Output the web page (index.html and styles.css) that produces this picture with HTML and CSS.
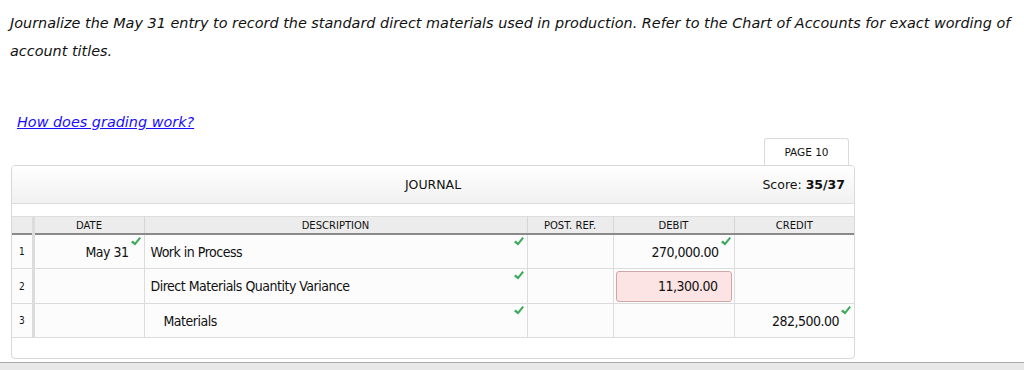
FILE: index.html
```html
<!DOCTYPE html>
<html lang="en">
<head>
    <meta charset="UTF-8">
    <meta name="viewport" content="width=device-width, initial-scale=1.0">
    <title>Journal Entry</title>
    <link rel="stylesheet" href="styles.css">
</head>
<body>

    <svg class="defs" width="0" height="0">
        <symbol id="tick" viewBox="0 0 10 9">
            <path d="M0 5.2 L1.9 3.6 L3.9 5.6 L8.4 0 L10 1.3 L4.1 8.6 Z" fill="currentColor"/>
        </symbol>
    </svg>

    <div class="page">
        <p class="prompt">Journalize the May 31 entry to record the standard direct materials used in production. Refer to the Chart of Accounts for exact wording of account titles.</p>

        <a href="#" class="help">How does grading work?</a>

        <div class="journal-wrap">
            <div class="tab">PAGE 10</div>

            <div class="journal">
                <div class="journal-head">
                    <span class="title">JOURNAL</span>
                    <span class="score">Score: <b>35/37</b></span>
                </div>

                <table class="entries">
                    <colgroup>
                        <col class="c-num">
                        <col class="c-date">
                        <col class="c-desc">
                        <col class="c-ref">
                        <col class="c-debit">
                        <col class="c-credit">
                    </colgroup>
                    <thead>
                        <tr>
                            <th class="num"></th>
                            <th>DATE</th>
                            <th>DESCRIPTION</th>
                            <th>POST. REF.</th>
                            <th>DEBIT</th>
                            <th>CREDIT</th>
                        </tr>
                    </thead>
                    <tbody>
                        <tr>
                            <td class="num">1</td>
                            <td class="date">May 31<svg class="tick"><use href="#tick"/></svg></td>
                            <td class="desc">Work in Process<svg class="tick"><use href="#tick"/></svg></td>
                            <td></td>
                            <td class="amount">270,000.00<svg class="tick"><use href="#tick"/></svg></td>
                            <td class="amount"></td>
                        </tr>
                        <tr class="tall">
                            <td class="num">2</td>
                            <td class="date"></td>
                            <td class="desc">Direct Materials Quantity Variance<svg class="tick"><use href="#tick"/></svg></td>
                            <td></td>
                            <td class="amount"><span class="wrong">11,300.00</span></td>
                            <td class="amount"></td>
                        </tr>
                        <tr>
                            <td class="num">3</td>
                            <td class="date"></td>
                            <td class="desc credit-line">Materials<svg class="tick"><use href="#tick"/></svg></td>
                            <td></td>
                            <td class="amount"></td>
                            <td class="amount">282,500.00<svg class="tick"><use href="#tick"/></svg></td>
                        </tr>
                    </tbody>
                </table>

                <div class="journal-foot"></div>
            </div>
        </div>
    </div>

    <div class="status-bar"></div>

</body>
</html>
```

FILE: styles.css
```css
body {
    margin: 0;
    font-family: "DejaVu Sans", Verdana, sans-serif;
    color: #111;
    background-color: #fff;
}

.defs {
    position: absolute;
}

.page {
    height: 362px;
    overflow: hidden;
}

.prompt {
    margin: 0;
    padding: 9px 10px 0;
    font-size: 14.4px;
    font-style: italic;
    line-height: 28px;
}

.help {
    display: inline-block;
    margin: 49px 0 0 17px;
    font-size: 14.4px;
    font-style: italic;
    color: #1a0dff;
    text-decoration: underline;
}

/* journal panel */

.journal-wrap {
    width: 844px;
    margin: 7px 0 0 11px;
    display: flex;
    flex-direction: column;
}

.tab {
    align-self: flex-end;
    width: 83px;
    height: 26px;
    margin-right: 6px;
    border: 1px solid #dadada;
    border-bottom: none;
    border-radius: 3px 3px 0 0;
    font-size: 10.5px;
    line-height: 26px;
    text-align: center;
    background-color: #fff;
}

.journal {
    border: 1px solid #d8d8d8;
    border-radius: 4px;
    overflow: hidden;
    background-color: #fff;
}

.journal-head {
    position: relative;
    height: 37px;
    border-bottom: 1px solid #dcdcdc;
    background: linear-gradient(#ffffff, #f1f1f1);
    display: flex;
    justify-content: center;
    align-items: center;
    font-size: 12.5px;
}

.journal-head .score {
    position: absolute;
    right: 9px;
    top: 11px;
}

.journal-head .score b {
    font-weight: bold;
}

/* entries table */

.entries {
    width: 100%;
    margin-top: 12px;
    border-collapse: collapse;
    table-layout: fixed;
}

.c-num { width: 21px; }
.c-date { width: 111px; }
.c-desc { width: 383px; }
.c-ref { width: 86px; }
.c-debit { width: 121px; }

.entries th {
    height: 16px;
    padding: 0;
    font-size: 10px;
    font-weight: normal;
    background-color: #ececec;
    border: 1px solid #d6d6d6;
    border-top: 1px solid #dedede;
    border-bottom: 2px solid #8a8a8a;
}

.entries td {
    position: relative;
    height: 33px;
    padding: 0 6px;
    font-family: "Liberation Sans Narrow", "DejaVu Sans Condensed", "Liberation Sans", sans-serif;
    font-stretch: condensed;
    font-size: 14px;
    letter-spacing: -0.5px;
    background-color: #fcfcfc;
    border: 1px solid #dcdcdc;
}

.entries .tall td {
    height: 34px;
}

.entries tr > :first-child {
    border-left: none;
}

.entries tr > :last-child {
    border-right: none;
}

.entries .num {
    padding: 0;
    font-size: 10px;
    letter-spacing: 0;
    text-align: center;
    border-right: 3px solid #dcdcdc;
}

.entries .date,
.entries .amount {
    text-align: right;
    padding-right: 15px;
}

.entries .credit-line {
    padding-left: 19px;
}

.wrong {
    display: block;
    margin: 0 -13px 0 -4px;
    padding: 0 13px 0 0;
    height: 29px;
    line-height: 29px;
    border: 1px solid #cfa6a6;
    border-radius: 3px;
    background-color: #fde4e4;
}

/* green tick in the top right of a graded cell */
.tick {
    position: absolute;
    top: 2px;
    right: 3px;
    width: 10px;
    height: 9px;
    color: #3caa5c;
}

.journal-foot {
    height: 20px;
}

.status-bar {
    height: 7px;
    border-top: 1px solid #a9a9a9;
    background-color: #e8e8e8;
}
```
